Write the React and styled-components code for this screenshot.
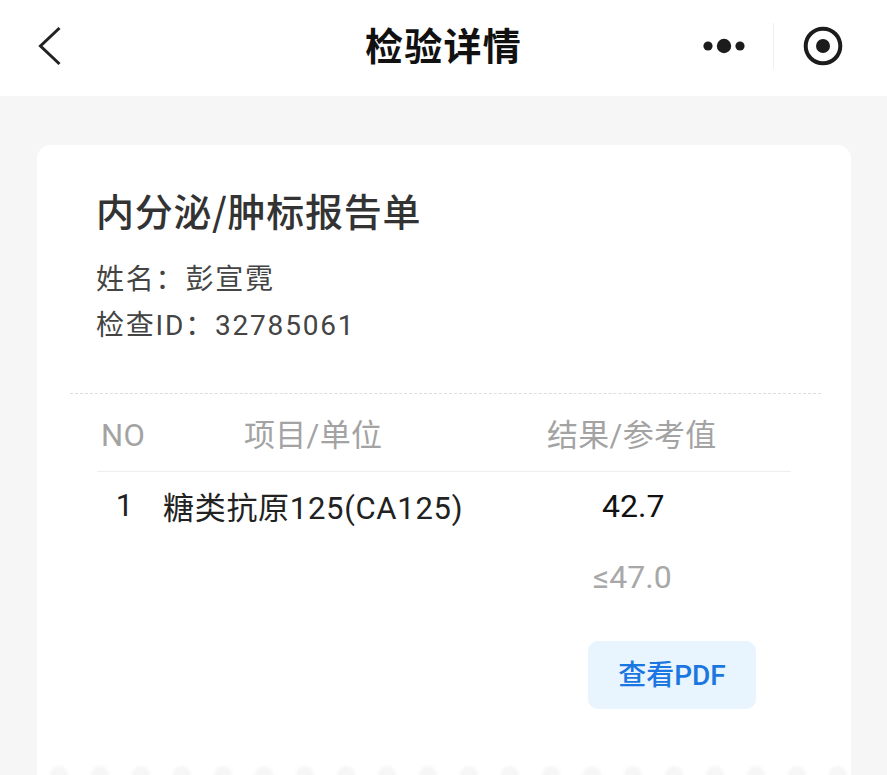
import React from "react";
import styled, { createGlobalStyle } from "styled-components";

const Global = createGlobalStyle`
  html, body { margin: 0; padding: 0; background: #f6f6f6; }
  body { font-family: Roboto, "Noto Sans CJK SC", sans-serif; }
`;
const Page = styled.div`
  width: 887px; height: 775px; overflow: hidden; background: #f6f6f6;
  display: flex; flex-direction: column;
`;
const Nav = styled.header`
  height: 96px; flex: none; background: #fff; position: relative;
  display: flex; align-items: center; justify-content: center; padding-bottom: 8px; box-sizing: border-box;
`;
const BackIcon = styled.svg`position: absolute; left: 37px; top: 25px;`;
const NavTitle = styled.h1`
  margin: 0; font-size: 38px; font-weight: 700; color: #111; line-height: 48px; letter-spacing: 1.2px;
  font-family: "Noto Sans CJK SC", sans-serif;
`;
const Capsule = styled.div`
  position: absolute; left: 702px; top: 23px; width: 142px; height: 46px;
  display: flex; align-items: center;
`;
const Dots = styled.svg`flex: none;`;
const Divider = styled.span`width: 1px; height: 46px; background: #eee; margin-left: 27px; margin-right: 29px; flex: none;`;
const Card = styled.main`
  margin: 49px 36px 0 37px; flex: 1; background: #fff; border-radius: 14px 14px 0 0;
  padding: 41px 0 0; box-sizing: border-box; display: flex; flex-direction: column; position: relative;
`;
const Scallop = styled.div`
  position: absolute; left: 0; right: 0; bottom: 0; height: 12px;
  background: radial-gradient(ellipse 11px 11px at 20px 12px, #f6f6f6 60%, transparent 100%) 2px 0 / 41px 12px repeat-x;
`;
const Intro = styled.section`
  padding: 0 60px; display: flex; flex-direction: column;
`;
const Title = styled.h2`
  margin: 0 0 0 -1px; font-size: 38px; font-weight: 500; line-height: 48px; color: #333;
  font-family: "Noto Sans CJK SC", sans-serif; letter-spacing: 0.7px;
`;
const Meta = styled.p`
  margin: 0 0 0 -1px; font-size: 28px; font-weight: 400; line-height: 46px; color: #444;
  letter-spacing: 1.8px;
  &:first-of-type { margin-top: 23px; }
`;
const Dash = styled.div`
  margin: 44px 30px 0 33px; border-top: 1px dashed #ddd; height: 0;
`;
const HeadRow = styled.div`
  display: grid; align-items: baseline; color: #a3a3a3; font-size: 31px; margin: 0 60px; padding: 16px 0 0 4px;
  height: 78px; border-bottom: 1px solid #eee; box-sizing: border-box;
  grid-template-columns: 143px 303px 1fr; letter-spacing: 0.3px;
`;
const HeadCell = styled.span`white-space: nowrap;`;
const DataRow = styled.div`
  display: grid; grid-template-columns: 66px 439px 1fr; margin: 0 60px; height: 69px; align-items: center; color: #222; font-size: 31px;
  padding-bottom: 2px; box-sizing: border-box;
`;
const NoCell = styled.span`text-align: center; padding-right: 11px;`;
const NameCell = styled.span`white-space: nowrap; letter-spacing: 0.7px;`;
const ValueCell = styled.span`color: #111; font-size: 32px;`;
const RefRow = styled.div`
  color: #a8a8a8; font-size: 32px; padding-left: 556px; height: 72px; line-height: 72px;
`;
const Actions = styled.div`
  padding-left: 551px; margin-top: 28px;
`;
const PdfButton = styled.button`
  width: 168px; height: 68px; border: 0; border-radius: 10px; background: #e8f4fe; color: #1a76e0;
  font-size: 28px; font-weight: 500; font-family: Roboto, "Noto Sans CJK SC", sans-serif; padding: 0 0 4px;
`;

export default function App() {
  return (
    <Page>
      <Global />
      <Nav>
        <BackIcon width="26" height="42" viewBox="0 0 26 42" fill="none">
          <path d="M22.5 3 L3.5 21 L22.5 39" stroke="#222" strokeWidth="3" />
        </BackIcon>
        <NavTitle>检验详情</NavTitle>
        <Capsule>
          <Dots width="44" height="20" viewBox="0 0 44 20">
            <circle cx="6" cy="10" r="4.6" fill="#1c1c1c" />
            <circle cx="22" cy="10" r="7.2" fill="#1c1c1c" />
            <circle cx="38" cy="10" r="4.6" fill="#1c1c1c" />
          </Dots>
          <Divider />
          <svg width="40" height="40" viewBox="0 0 40 40">
            <circle cx="20" cy="20" r="17.3" fill="none" stroke="#1c1c1c" strokeWidth="4" />
            <circle cx="20" cy="20" r="7" fill="#1c1c1c" />
          </svg>
        </Capsule>
      </Nav>
      <Card>
        <Intro>
          <Title>内分泌/肿标报告单</Title>
          <Meta>姓名：彭宣霓</Meta>
          <Meta>检查ID：32785061</Meta>
        </Intro>
        <Dash />
        <HeadRow>
          <HeadCell>NO</HeadCell>
          <HeadCell>项目/单位</HeadCell>
          <HeadCell>结果/参考值</HeadCell>
        </HeadRow>
        <DataRow>
          <NoCell>1</NoCell>
          <NameCell>糖类抗原125(CA125)</NameCell>
          <ValueCell>42.7</ValueCell>
        </DataRow>
        <RefRow>≤47.0</RefRow>
        <Actions>
          <PdfButton>查看PDF</PdfButton>
        </Actions>
        <Scallop />
      </Card>
    </Page>
  );
}
